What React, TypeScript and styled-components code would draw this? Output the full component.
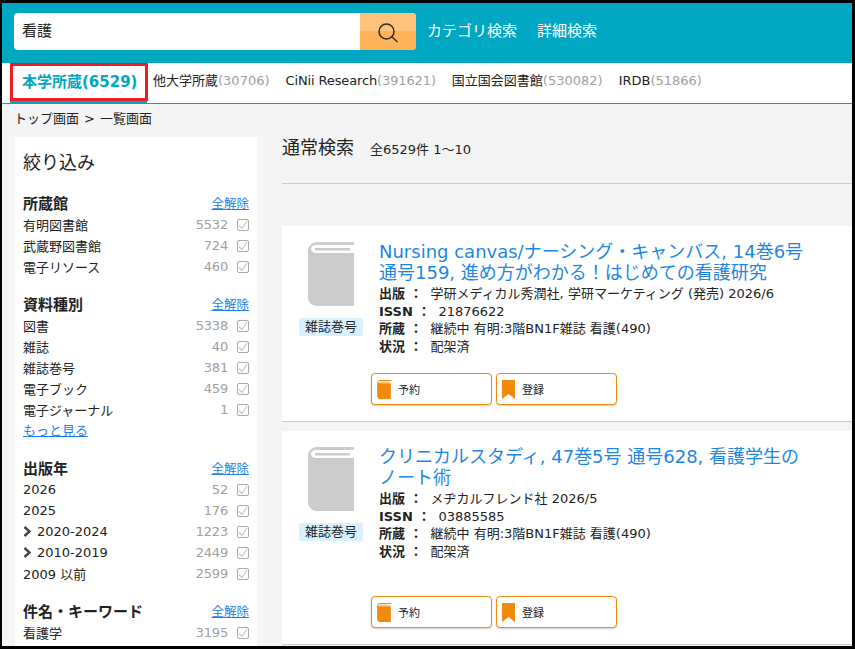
import React from 'react';
import styled, { createGlobalStyle } from 'styled-components';

const font = '"DejaVu Sans", "Noto Sans CJK JP", sans-serif';

const GlobalStyle = createGlobalStyle`
  html, body {
    margin: 0;
    padding: 0;
    background: #000;
  }
  * {
    box-sizing: border-box;
  }
  a {
    color: #1e7fe6;
  }
`;

const facets = [
  {
    title: '所蔵館',
    rows: [
      { label: '有明図書館', count: 5532 },
      { label: '武蔵野図書館', count: 724 },
      { label: '電子リソース', count: 460 },
    ],
  },
  {
    title: '資料種別',
    more: true,
    rows: [
      { label: '図書', count: 5338, link: true },
      { label: '雑誌', count: 40, link: true },
      { label: '雑誌巻号', count: 381, link: true },
      { label: '電子ブック', count: 459, link: true },
      { label: '電子ジャーナル', count: 1, link: true },
    ],
  },
  {
    title: '出版年',
    rows: [
      { label: '2026', count: 52 },
      { label: '2025', count: 176 },
      { label: '2020-2024', count: 1223, open: true },
      { label: '2010-2019', count: 2449, open: true },
      { label: '2009 以前', count: 2599 },
    ],
  },
  {
    title: '件名・キーワード',
    rows: [{ label: '看護学', count: 3195 }],
  },
];

const results = [
  {
    title: 'Nursing canvas/ナーシング・キャンバス, 14巻6号 通号159, 進め方がわかる！はじめての看護研究',
    publisher: '学研メディカル秀潤社, 学研マーケティング (発売) 2026/6',
    issn: '21876622',
    tall: false,
  },
  {
    title: 'クリニカルスタディ, 47巻5号 通号628, 看護学生のノート術',
    publisher: 'メヂカルフレンド社 2026/5',
    issn: '03885585',
    tall: true,
  },
];

const BookIcon = ({ color, className }: { color: string; className?: string }) => (
  <svg className={className} viewBox="0 0 46 64">
    <path
      fill={color}
      d="M9 0H46V3H9C5.500 3 3 4.500 3 7C3 9.500 5.500 11 9 11H46V64H9C4 64 0 60 0 55V9C0 4 4 0 9 0Z"
    />
    <path fill={color} d="M7 6H42V8.500H7Z" />
  </svg>
);

const BookmarkIcon = () => (
  <svg width="13" height="19" viewBox="0 0 13 19">
    <path fill="#f08a0c" d="M0 0H13V19L6.500 14L0 19Z" />
  </svg>
);

const SearchIcon = () => (
  <StyledSearchIcon width="20" height="20" viewBox="0 0 20 20" fill="none" stroke="#2e2e2e" strokeWidth="1.500">
    <circle cx="8.500" cy="8.500" r="7.500" />
    <path d="M14 14L19 18.500" strokeLinecap="round" />
  </StyledSearchIcon>
);

const Chevron = () => (
  <svg width="9" height="11" viewBox="0 0 9 11" fill="none" stroke="#444" strokeWidth="2.400">
    <path d="M1.500 1L6.500 5.500L1.500 10" />
  </svg>
);

const CheckBox = () => (
  <StyledCheck>
    <svg width="10" height="10" viewBox="0 0 10 10" fill="none" stroke="#c4c4c4" strokeWidth="1.100">
      <path d="M1 5.500L4 8.500L9 1" />
    </svg>
  </StyledCheck>
);

const App = () => {
  return (
    <StyledFrame>
      <GlobalStyle />
      <StyledHeader>
        <StyledSearch>
          <StyledInput>看護</StyledInput>
          <StyledSearchButton>
            <SearchIcon />
          </StyledSearchButton>
        </StyledSearch>
        <StyledHeaderLink>カテゴリ検索</StyledHeaderLink>
        <StyledHeaderLink>詳細検索</StyledHeaderLink>
      </StyledHeader>

      <StyledTabs>
        <StyledActiveTab>本学所蔵(6529)</StyledActiveTab>
        <StyledTab>
          他大学所蔵<span>(30706)</span>
        </StyledTab>
        <StyledTab $tight>
          CiNii Research<span>(391621)</span>
        </StyledTab>
        <StyledTab>
          国立国会図書館<span>(530082)</span>
        </StyledTab>
        <StyledTab>
          IRDB<span>(51866)</span>
        </StyledTab>
      </StyledTabs>

      <StyledCrumbs>
        トップ画面<StyledCrumbSep>&gt;</StyledCrumbSep>一覧画面
      </StyledCrumbs>

      <StyledColumns>
        <StyledSidebar>
          <StyledSideTitle>絞り込み</StyledSideTitle>
          {facets.map((facet) => (
            <StyledFacet key={facet.title}>
              <StyledFacetHead>
                <h3>{facet.title}</h3>
                <a href="#">全解除</a>
              </StyledFacetHead>
              {facet.rows.map((row: any) => (
                <StyledFacetRow key={row.label}>
                  <StyledFacetLabel>
                    {row.open && <Chevron />}
                    {row.label}
                  </StyledFacetLabel>
                  <StyledCount>{row.count}</StyledCount>
                  <CheckBox />
                </StyledFacetRow>
              ))}
              {facet.more && <StyledMore href="#">もっと見る</StyledMore>}
            </StyledFacet>
          ))}
        </StyledSidebar>

        <StyledMain>
          <StyledResultHead>
            <h2>通常検索</h2>
            <span>全6529件 1～10</span>
          </StyledResultHead>
          {results.map((item) => (
            <StyledCard key={item.issn} $tall={item.tall}>
              <StyledCardBody>
                <StyledThumb>
                  <StyledCover color="#cccccc" />
                  <StyledBadge>雑誌巻号</StyledBadge>
                </StyledThumb>
                <StyledInfo>
                  <StyledCardTitle>{item.title}</StyledCardTitle>
                  <StyledMeta>
                    <b>出版 ：</b>
                    {item.publisher}
                  </StyledMeta>
                  <StyledMeta>
                    <b>ISSN ：</b>
                    {item.issn}
                  </StyledMeta>
                  <StyledMeta>
                    <b>所蔵 ：</b>継続中 有明:3階BN1F雑誌 看護(490)
                  </StyledMeta>
                  <StyledMeta>
                    <b>状況 ：</b>配架済
                  </StyledMeta>
                </StyledInfo>
              </StyledCardBody>
              <StyledActions>
                <StyledAction>
                  <StyledActionBook color="#f08a0c" />
                  予約
                </StyledAction>
                <StyledAction>
                  <BookmarkIcon />
                  登録
                </StyledAction>
              </StyledActions>
            </StyledCard>
          ))}
        </StyledMain>
      </StyledColumns>

      <StyledHighlight />
    </StyledFrame>
  );
};

export default App;

const StyledFrame = styled.div`
  position: relative;
  width: 855px;
  height: 649px;
  border-style: solid;
  border-color: #000;
  border-width: 3px 3px 3px 2px;
  background: #f4f4f4;
  overflow: hidden;
  font-family: ${font};
  color: #222;
`;

const StyledHeader = styled.div`
  height: 60px;
  background: #00a7c2;
  display: flex;
  align-items: flex-start;
  padding: 10px 0 0 12px;
`;

const StyledSearch = styled.div`
  width: 402px;
  height: 37px;
  display: flex;
  margin-right: 11px;
  background: #fff;
  border-radius: 4px;
  overflow: hidden;
`;

const StyledInput = styled.div`
  flex: 1;
  padding-left: 8px;
  font-size: 15px;
  line-height: 36px;
`;

const StyledSearchButton = styled.div`
  width: 56px;
  display: flex;
  align-items: center;
  justify-content: center;
  background: linear-gradient(#ffc27a 50%, #ffb257 50%);
`;

const StyledSearchIcon = styled.svg`
  margin-top: 3px;
`;

const StyledHeaderLink = styled.div`
  margin-right: 20px;
  color: #fff;
  font-size: 15px;
  line-height: 36px;
`;

const StyledTabs = styled.div`
  height: 41px;
  display: flex;
  align-items: stretch;
  background: #fff;
  border-bottom: 1px solid #00a7c2;
`;

const StyledTab = styled.div<{ $tight?: boolean }>`
  margin-right: 16px;
  font-size: 13px;
  line-height: 36px;
  white-space: nowrap;
  letter-spacing: ${(p) => (p.$tight ? '-0.13px' : 'normal')};

  span {
    color: #a0a0a0;
  }
`;

const StyledActiveTab = styled.div`
  margin: 0 6px 0 8px;
  width: 137px;
  padding-left: 12px;
  color: #00a7c2;
  font-size: 15px;
  font-weight: 700;
  line-height: 38px;
  border-bottom: 3px solid #00a7c2;
  white-space: nowrap;
`;

const StyledCrumbs = styled.div`
  height: 33px;
  padding: 6px 0 0 12px;
  font-size: 13px;
  line-height: 18px;
`;

const StyledCrumbSep = styled.span`
  margin: 0 5px;
`;

const StyledColumns = styled.div`
  display: flex;
  align-items: flex-start;
`;

const StyledSidebar = styled.div`
  width: 242px;
  margin-left: 13px;
  padding: 13px 8px 0;
  background: #fff;
`;

const StyledSideTitle = styled.div`
  font-size: 18px;
  line-height: 26px;
  margin-bottom: 16px;
`;

const StyledFacet = styled.div`
  margin-bottom: 16px;
`;

const StyledFacetHead = styled.div`
  display: flex;
  justify-content: space-between;
  align-items: center;
  height: 22px;
  padding: 0 0 2px 0;

  h3 {
    margin: 0;
    font-size: 15px;
    font-weight: 700;
  }

  a {
    font-size: 12.500px;
  }
`;

const StyledFacetRow = styled.div`
  display: flex;
  align-items: center;
  height: 21px;
  font-size: 13px;
`;

const StyledFacetLabel = styled.div`
  flex: 1;
  display: flex;
  align-items: center;
  gap: 5px;
  white-space: nowrap;
`;

const StyledCount = styled.div`
  color: #a0a0a0;
  letter-spacing: -0.2px;
`;

const StyledCheck = styled.div`
  width: 12px;
  height: 12px;
  margin-left: 9px;
  display: flex;
  align-items: center;
  justify-content: center;
  border: 1px solid #aaa;
  border-radius: 2px;
`;

const StyledMore = styled.a`
  display: block;
  font-size: 13px;
  line-height: 21px;
`;

const StyledMain = styled.div`
  flex: 1;
  margin-left: 25px;
  min-width: 0;
`;

const StyledResultHead = styled.div`
  height: 47px;
  margin-bottom: 42px;
  display: flex;
  align-items: baseline;
  gap: 16px;
  border-bottom: 1px solid #ccc;
  font-size: 13px;
  line-height: 22px;

  h2 {
    margin: 0;
    font-size: 18px;
    font-weight: 400;
  }
`;

const StyledCard = styled.div<{ $tall: boolean }>`
  height: ${(p) => (p.$tall ? 214 : 196)}px;
  margin-bottom: 9px;
  padding: 16px 0 0 17px;
  display: flex;
  flex-direction: column;
  background: #fff;
  border-bottom: 1px solid #ccc;
`;

const StyledCardBody = styled.div`
  flex: 1;
  display: flex;
`;

const StyledThumb = styled.div`
  width: 64px;
  display: flex;
  flex-direction: column;
  align-items: center;
`;

const StyledCover = styled(BookIcon)`
  width: 46px;
  height: 64px;
`;

const StyledBadge = styled.div`
  margin-top: 12px;
  width: 64px;
  height: 18px;
  background: #d9f0ff;
  border-radius: 2px;
  font-size: 13px;
  line-height: 18px;
  text-align: center;
  white-space: nowrap;
`;

const StyledInfo = styled.div`
  margin: -1px 0 0 16px;
  flex: 1;
`;

const StyledCardTitle = styled.a`
  display: block;
  width: 430px;
  margin-bottom: 2px;
  color: #1e86e6;
  font-size: 18px;
  line-height: 21px;
`;

const StyledMeta = styled.div`
  font-size: 13px;
  line-height: 17.500px;

  b {
    margin-right: 8px;
  }
`;

const StyledActions = styled.div`
  display: flex;
  gap: 4px;
  margin: 0 0 16px 72px;
`;

const StyledAction = styled.div`
  width: 121px;
  height: 32px;
  padding-left: 5px;
  display: flex;
  align-items: center;
  gap: 7px;
  background: #fff;
  border: 1px solid #f08a0c;
  border-radius: 4px;
  box-shadow: 0 1px 2px rgba(0, 0, 0, 0.2);
  font-size: 11px;
`;

const StyledActionBook = styled(BookIcon)`
  width: 14px;
  height: 19px;
`;

const StyledHighlight = styled.div`
  position: absolute;
  left: 8px;
  top: 60px;
  width: 138px;
  height: 38px;
  border: 3px solid #ee1c25;
`;
